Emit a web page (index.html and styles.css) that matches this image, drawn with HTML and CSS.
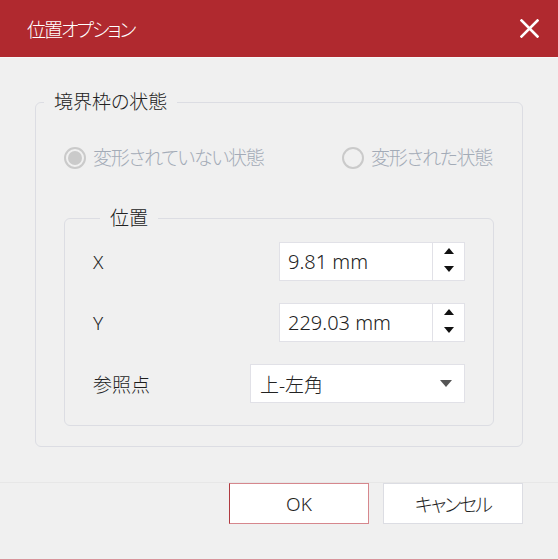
FILE: index.html
```html
<!DOCTYPE html>
<html lang="ja">
<head>
<meta charset="utf-8">
<title>位置オプション</title>
<link rel="stylesheet" href="styles.css">
</head>
<body>
<div class="dialog">
  <div class="titlebar">
    <span class="title">位置オプション</span>
    <svg class="close" width="19" height="19" viewBox="0 0 19 19" aria-label="閉じる">
      <path d="M1.5 1.5 L17.5 17.5 M17.5 1.5 L1.5 17.5" stroke="#fff" stroke-width="2.6" stroke-linecap="square" fill="none"/>
    </svg>
  </div>
  <div class="content">
    <fieldset class="group outer">
      <legend class="legend">境界枠の状態</legend>
      <div class="radios">
        <label class="radio-item">
          <span class="radio checked"></span>
          <span class="radio-text">変形されていない状態</span>
        </label>
        <label class="radio-item">
          <span class="radio"></span>
          <span class="radio-text">変形された状態</span>
        </label>
      </div>
      <fieldset class="group inner">
        <legend class="legend inner-legend">位置</legend>
        <div class="rows">
          <div class="row">
            <span class="label latin">X</span>
            <div class="spin">
              <span class="value latin">9.81 mm</span>
              <span class="spin-btns">
                <span class="tri up"></span>
                <span class="tri down"></span>
              </span>
            </div>
          </div>
          <div class="row">
            <span class="label latin">Y</span>
            <div class="spin">
              <span class="value latin">229.03 mm</span>
              <span class="spin-btns">
                <span class="tri up"></span>
                <span class="tri down"></span>
              </span>
            </div>
          </div>
          <div class="row">
            <span class="label">参照点</span>
            <div class="select">
              <span class="value">上-左角</span>
              <span class="caret"></span>
            </div>
          </div>
        </div>
      </fieldset>
    </fieldset>
  </div>
  <div class="footer">
    <button class="btn ok latin">OK</button>
    <button class="btn cancel">キャンセル</button>
  </div>
</div>
</body>
</html>
```

FILE: styles.css
```css
* { box-sizing: border-box; }

html, body {
  margin: 0;
  padding: 0;
}

body {
  width: 558px;
  height: 560px;
  background: #f0f0f0;
  font-family: "Noto Sans", "Noto Sans CJK JP", sans-serif;
  font-feature-settings: "palt";
  font-size: 19px;
  font-weight: 300;
  color: #1e1e1e;
  overflow: hidden;
}

.dialog {
  width: 558px;
  height: 560px;
  display: flex;
  flex-direction: column;
  border-bottom: 1px solid #d9939a;
}

.titlebar {
  height: 58px;
  flex: none;
  background: #b0292f;
  border-bottom: 1px solid #f7f7f7;
  display: flex;
  align-items: center;
  justify-content: space-between;
  padding: 0 19px 0 27px;
  color: #fff;
}

.title {
  font-size: 19px;
  line-height: 24px;
  letter-spacing: -2px;
  position: relative;
  top: 1px;
}

.close {
  display: block;
}

.content {
  padding: 32px 35px 0;
}

.group {
  margin: 0;
  border: 1px solid #dcdde3;
  border-radius: 6px;
  min-width: 0;
}

.outer {
  padding: 0 0 20px;
}

.legend {
  margin-left: 8px;
  padding: 0 10px;
  line-height: 24px;
  font-size: 19px;
  color: #222;
}

.inner-legend {
  margin-left: 7px;
}

.radios {
  display: grid;
  grid-template-columns: 278px auto;
  margin: 31px 28px 0;
  height: 26px;
  align-items: center;
}

.radio-item {
  display: flex;
  align-items: center;
  gap: 7px;
  white-space: nowrap;
}

.radio {
  width: 22px;
  height: 22px;
  border: 2px solid #cacaca;
  border-radius: 50%;
  display: flex;
  align-items: center;
  justify-content: center;
  flex: none;
}

.radio.checked::after {
  content: "";
  width: 14px;
  height: 14px;
  border-radius: 50%;
  background: #cacaca;
}

.radio-text {
  color: #a3abb7;
  line-height: 26px;
  letter-spacing: -1.3px;
}

.inner {
  margin: 35px 28px 0;
  padding: 12px 28px 22px;
}

.rows {
  display: flex;
  flex-direction: column;
  gap: 22px;
}

.row {
  height: 39px;
  display: flex;
  align-items: center;
  justify-content: space-between;
}

.label {
  color: #1e1e1e;
}

.latin {
  font-weight: 350;
}

.spin {
  width: 186px;
  height: 39px;
  background: #fff;
  border: 1px solid #e1e1e7;
  display: flex;
  align-items: stretch;
}

.value {
  flex: 1;
  display: flex;
  align-items: center;
  padding-left: 8px;
  font-size: 20px;
  color: #222;
}

.spin-btns {
  width: 32px;
  border-left: 1px solid #e1e1e7;
  display: flex;
  flex-direction: column;
  align-items: center;
  justify-content: space-between;
  padding: 5px 0 8px;
}

.tri {
  width: 0;
  height: 0;
  border-left: 5.5px solid transparent;
  border-right: 5.5px solid transparent;
}

.tri.up {
  border-bottom: 6px solid #111;
}

.tri.down {
  border-top: 6px solid #111;
}

.select {
  width: 215px;
  height: 39px;
  background: #fff;
  border: 1px solid #e1e1e7;
  display: flex;
  align-items: center;
  padding-right: 12px;
}

.select .value {
  padding-left: 9px;
  font-size: 19px;
}

.caret {
  width: 0;
  height: 0;
  border-left: 6.5px solid transparent;
  border-right: 6.5px solid transparent;
  border-top: 7px solid #555;
}

.footer {
  margin-top: 35px;
  border-top: 1px solid #e7e7e7;
  display: flex;
  justify-content: flex-end;
  gap: 14px;
  padding-right: 35px;
}

.btn {
  width: 140px;
  height: 41px;
  margin: 0;
  background: #fff;
  border: 1px solid #dcdde3;
  font-family: inherit;
  font-feature-settings: "palt";
  font-size: 19px;
  font-weight: 300;
  color: #1e1e1e;
  padding: 0;
}

.btn.latin {
  font-weight: 350;
}

.btn.cancel {
  letter-spacing: -2px;
}

.btn.ok {
  border-color: #d6878d;
  border-left-color: #b03a40;
}
```
